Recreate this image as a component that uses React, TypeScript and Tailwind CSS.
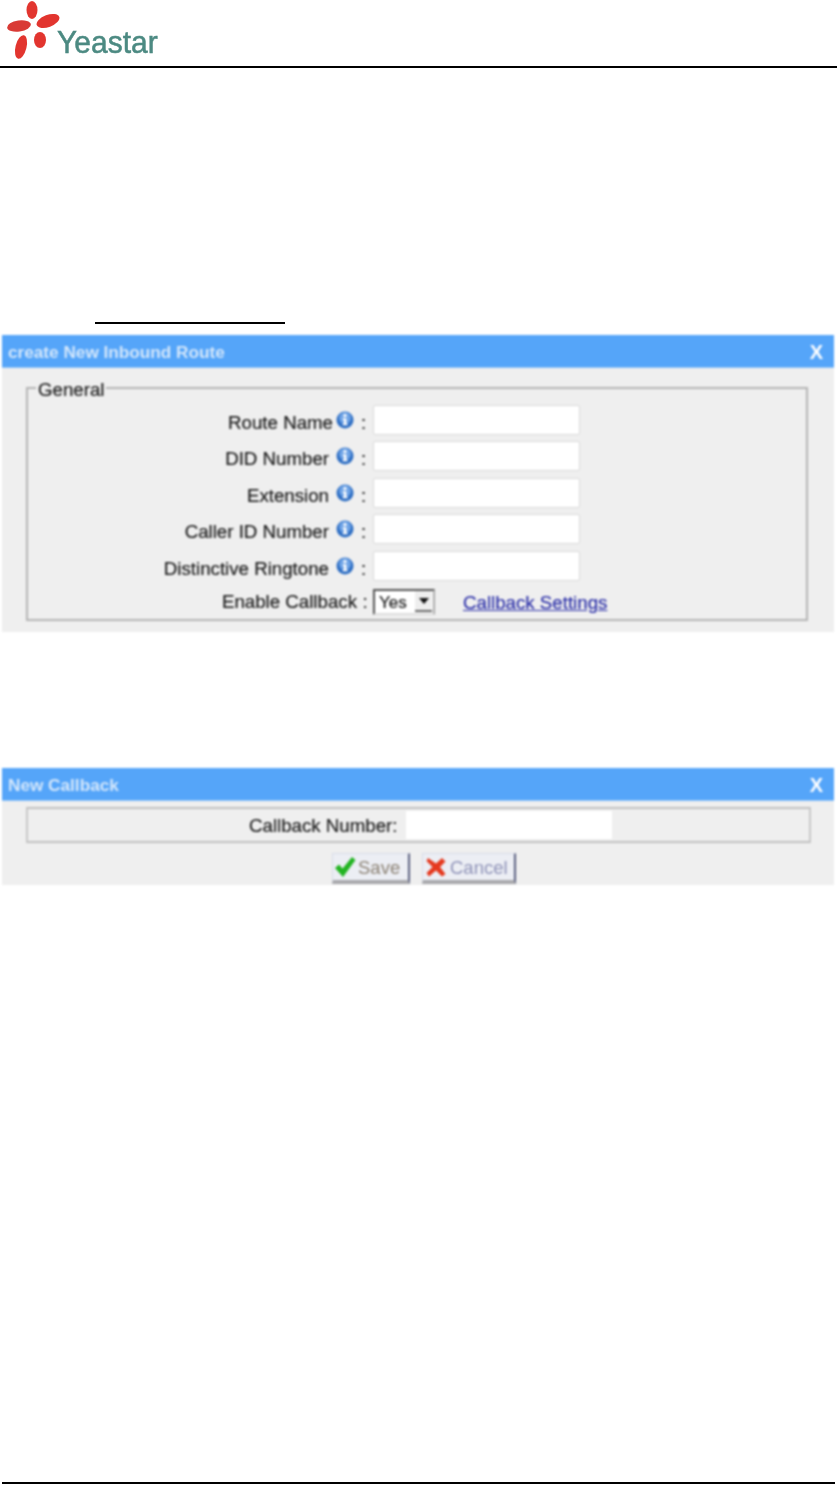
function InfoIcon() {
  return (
    <svg width="18" height="18" viewBox="0 0 18 18" className="shrink-0">
      <circle cx="9" cy="9" r="8.5" fill="#2f6fc4" />
      <circle cx="9" cy="7" r="6" fill="#6ea3e6" />
      <circle cx="9" cy="4.6" r="1.7" fill="#fff" />
      <path d="M6.800 7.300h3.600v5.500h1.200v1.500H6.600v-1.500h1.200V8.900h-1z" fill="#fff" />
    </svg>
  )
}

function Row({ label, tight }: { label: string; tight?: boolean }) {
  return (
    <div className="grid h-[30px] grid-cols-[326px_19px_207px] items-center">
      <div className="flex items-center justify-end">
        <span className="pt-[6px]">{label}</span>
        <span className={tight ? 'ml-[3px]' : 'ml-[7px]'}>
          <InfoIcon />
        </span>
      </div>
      <span className="pt-[6px] text-center">:</span>
      <input className="h-[30px] w-[207px] rounded-[2px] border border-[#dadada] bg-white" />
    </div>
  )
}

function TitleBar({ title }: { title: string }) {
  return (
    <div className="flex h-[33px] items-center justify-between border-b border-[#8fc4fa] bg-[#55a5f9] pl-[6px] pr-[11px] text-[17.2px] font-bold text-[#d4e7fb] [-webkit-text-stroke:0px]">
      <span className="pt-[1px]">{title}</span>
      <span className="pt-[1px] text-[20px] text-white">X</span>
    </div>
  )
}

function SmallButton({ label, color, width, icon }: { label: string; color: string; width: string; icon: React.ReactNode }) {
  return (
    <button className={`flex h-[31px] items-center gap-[3px] border-t border-r-2 border-b-[4px] border-l border-t-[#d8dce8] border-r-[#5a6080] border-b-[#a9a9ad] border-l-[#d8dce8] bg-[#eceef4] pl-[3px] text-[18.5px] [-webkit-text-stroke:0px] ${color} ${width}`}>
      {icon}
      <span className="pt-[1px]">{label}</span>
    </button>
  )
}

export default function App() {
  return (
    <div className="flex h-[1485px] w-[837px] flex-col bg-white font-['Liberation_Sans',Arial,sans-serif] text-[18.7px] leading-[22px] text-[#1c1c1c]">
      <header className="h-[68px] shrink-0 border-b-2 border-black">
        <div className="flex h-[66px] items-end pl-[6px] blur-[0.7px]">
          <svg width="54" height="60" viewBox="0 0 54 60" className="mb-[6px] shrink-0">
            <ellipse cx="26" cy="10" rx="5.500" ry="9" fill="#e2352f" />
            <ellipse cx="42" cy="21" rx="12" ry="6" fill="#e2352f" transform="rotate(-20 42 21)" />
            <ellipse cx="13" cy="26" rx="12" ry="5.500" fill="#d93a35" transform="rotate(-8 13 26)" />
            <ellipse cx="15" cy="47" rx="5.500" ry="12" fill="#e2352f" transform="rotate(14 15 47)" />
            <ellipse cx="34" cy="40" rx="6" ry="8" fill="#e2352f" />
          </svg>
          <span className="mb-[7px] -ml-[3px] origin-bottom scale-y-[1.05] text-[30px] leading-[32px] text-[#4c8a82] [-webkit-text-stroke:0.5px_#4c8a82]">Yeastar</span>
        </div>
      </header>

      <div className="ml-[95px] mt-[254px] h-[2px] w-[190px] shrink-0 bg-black" />

      <section className="ml-[2px] mt-[11px] h-[297px] w-[832px] shrink-0 bg-[#efefef] blur-[0.8px] [-webkit-text-stroke:0.2px_#1c1c1c]">
        <TitleBar title="create New Inbound Route" />
        <fieldset className="mx-[24px] mt-[9px] h-[244px] w-[782px] border-2 border-[#b4b4b4]">
          <legend className="ml-[8px] px-[2px]">
            <span className="relative top-[2px]">General</span>
          </legend>
          <div className="mt-[6px] flex flex-col gap-[6.4px]">
            <Row label="Route Name" tight />
            <Row label="DID Number" />
            <Row label="Extension" />
            <Row label="Caller ID Number" />
            <Row label="Distinctive Ringtone" />
          </div>
          <div className="mt-[8px] grid h-[26px] grid-cols-[329px_16px_auto] items-center">
            <span className="pt-[1px] text-right">Enable Callback</span>
            <span className="pt-[1px] text-center">:</span>
            <div className="flex items-center">
              <div className="flex h-[26px] w-[62px] items-center justify-between border-2 border-t-[#555] border-r-[#aaa] border-b-[#ddd] border-l-[#555] bg-white pl-[4px] text-[17px]">
                <span className="pt-[2px]">Yes</span>
                <span className="mr-[1px] flex h-[21px] w-[17px] items-center justify-center border-b-2 border-[#666] bg-[#eeeeee]">
                  <svg width="10" height="6" viewBox="0 0 10 6"><path d="M0 0h10L5 6z" fill="#111" /></svg>
                </span>
              </div>
              <a href="#" className="ml-[28px] pt-[3px] text-[#2b2fa8] underline [-webkit-text-stroke:0.2px_#2b2fa8]">Callback Settings</a>
            </div>
          </div>
        </fieldset>
      </section>

      <section className="ml-[2px] mt-[136px] h-[117px] w-[832px] shrink-0 bg-[#efefef] blur-[0.8px] [-webkit-text-stroke:0.2px_#1c1c1c]">
        <TitleBar title="New Callback" />
        <div className="mx-[24px] mt-[6px] flex h-[36px] w-[785px] items-center border-2 border-[#c0c0c0] border-r-[#c8c8c8] border-l-[#c8c8c8] pl-[221px]">
          <span className="pt-[2px]">Callback Number:</span>
          <input className="ml-[8px] h-[28px] w-[206px] bg-white" />
        </div>
        <div className="mt-[10px] flex justify-center gap-[12px] pl-[12px]">
          <SmallButton
            label="Save"
            color="text-[#8c8274]"
            width="w-[78px]"
            icon={
              <svg width="22" height="22" viewBox="0 0 22 22" className="-ml-[2px] -mr-[1px]">
                <path d="M1 12l4-3.500 3.500 4L18 1l3.500 3L9 21z" fill="#22b422" />
              </svg>
            }
          />
          <SmallButton
            label="Cancel"
            color="text-[#8f93b8]"
            width="w-[94px]"
            icon={
              <svg width="20" height="20" viewBox="0 0 20 20" className="mr-[1px]">
                <path d="M2 1l8 5.500L16 1l3.500 3.500L14 10l5.500 7-3.500 2.500-6-6-7 6L.5 16l6-6L.5 4z" fill="#e5391f" />
              </svg>
            }
          />
        </div>
      </section>

      <div className="ml-[2px] mt-auto mb-[1px] h-[2px] w-[833px] shrink-0 bg-black" />
    </div>
  )
}
